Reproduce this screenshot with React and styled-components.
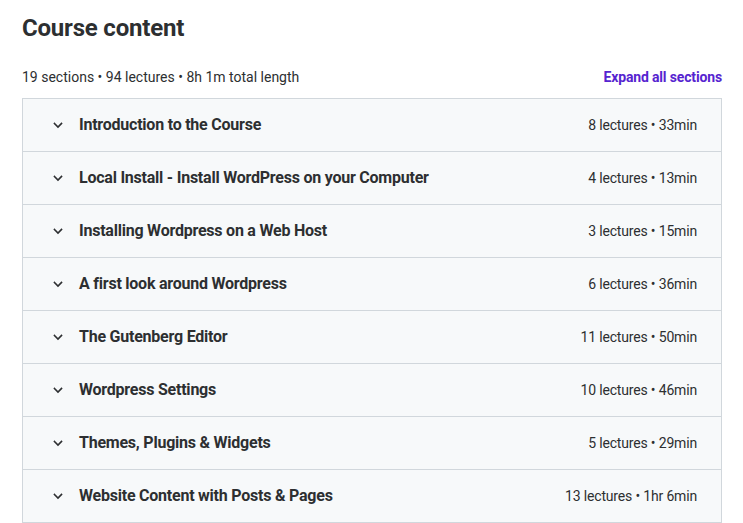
import styled, { createGlobalStyle } from "styled-components"

const sections = [
    { title: "Introduction to the Course", meta: "8 lectures • 33min" },
    { title: "Local Install - Install WordPress on your Computer", meta: "4 lectures • 13min" },
    { title: "Installing Wordpress on a Web Host", meta: "3 lectures • 15min" },
    { title: "A first look around Wordpress", meta: "6 lectures • 36min" },
    { title: "The Gutenberg Editor", meta: "11 lectures • 50min" },
    { title: "Wordpress Settings", meta: "10 lectures • 46min" },
    { title: "Themes, Plugins & Widgets", meta: "5 lectures • 29min" },
    { title: "Website Content with Posts & Pages", meta: "13 lectures • 1hr 6min" },
]

function Chevron() {
    return (
        <svg width="12" height="12" viewBox="0 0 24 24" fill="none" stroke="#2d2f31" strokeWidth="3.2" strokeLinecap="square">
            <path d="M5 9l7 7 7-7" />
        </svg>
    )
}

export default function App() {
    return (
        <>
            <GlobalStyle />
            <Page>
                <Heading>Course content</Heading>
                <Summary>
                    <span>19 sections • 94 lectures • 8h 1m total length</span>
                    <ExpandLink>Expand all sections</ExpandLink>
                </Summary>
                <List>
                    {sections.map((s) => (
                        <Row key={s.title}>
                            <Toggle><Chevron /></Toggle>
                            <Title>{s.title}</Title>
                            <Meta>{s.meta}</Meta>
                        </Row>
                    ))}
                </List>
            </Page>
        </>
    )
}

const GlobalStyle = createGlobalStyle`
    body {
        margin: 0;
        background: #fff;
        font-family: Roboto, "Liberation Sans", sans-serif;
        color: #2d2f31;
    }
`

const Page = styled.div`
    padding: 12px 21px 0 22px;
`

const Heading = styled.h2`
    margin: 0;
    font-size: 24px;
    font-weight: 700;
    line-height: 32px;
    letter-spacing: -0.2px;
`

const Summary = styled.div`
    display: flex;
    justify-content: space-between;
    align-items: center;
    margin-top: 23px;
    height: 20px;
    font-size: 14px;
    color: #2d2f31;
`

const ExpandLink = styled.a`
    color: #5624d0;
    font-weight: 700;
    letter-spacing: -0.15px;
    cursor: pointer;
`

const List = styled.div`
    margin-top: 11px;
    border: 1px solid #d1d7dc;
    border-bottom: none;
`

const Row = styled.div`
    display: flex;
    align-items: center;
    height: 52px;
    padding: 0 24px 1px 29px;
    box-sizing: border-box;
    height: 53px;
    background: #f7f9fa;
    border-bottom: 1px solid #d1d7dc;
`

const Toggle = styled.span`
    display: flex;
    width: 12px;
    margin-right: 15px;
`

const Title = styled.span`
    flex: 1;
    font-size: 16px;
    font-weight: 700;
    letter-spacing: -0.23px;
`

const Meta = styled.span`
    font-size: 14px;
    letter-spacing: -0.17px;
`
